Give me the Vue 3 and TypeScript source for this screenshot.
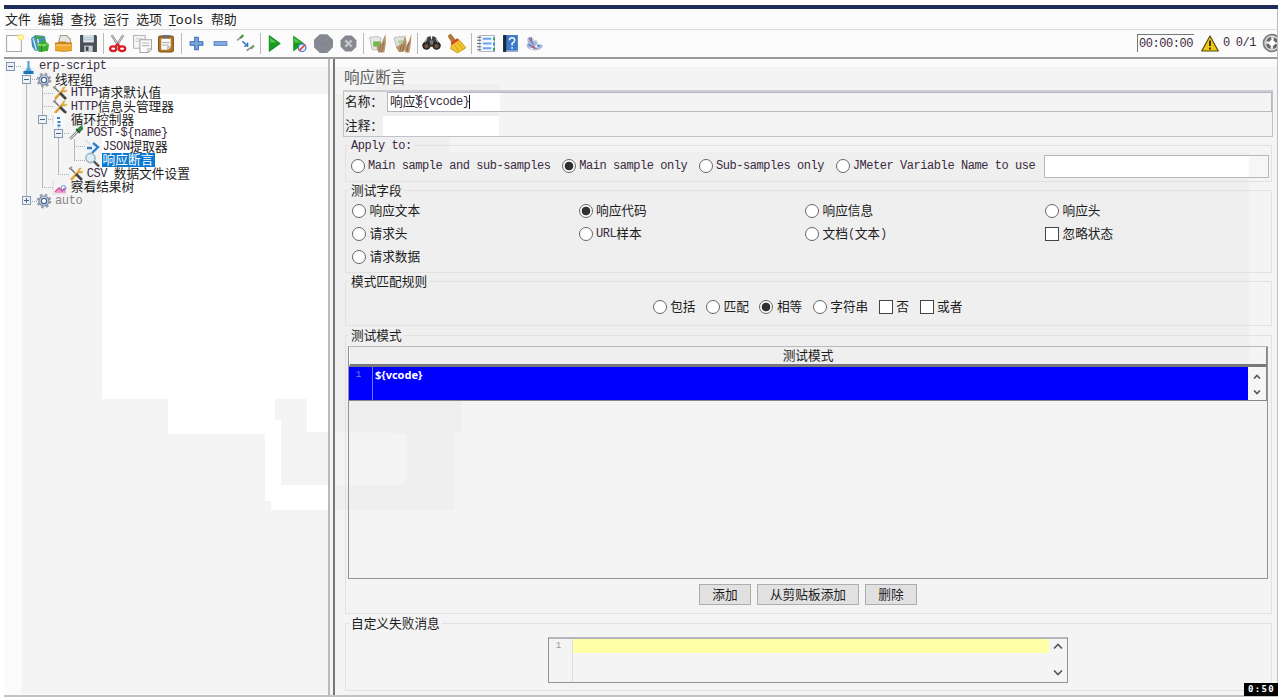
<script setup lang="ts">
import { defineComponent, h } from 'vue'

// Splits a string into half-width and full-width runs so each gets its own metrics.
const Txt = defineComponent({
  props: { t: { type: String, required: true } },
  setup(props) {
    return () => {
      const runs = props.t.match(/[\x20-\x7e]+|[^\x20-\x7e]+/g) ?? []
      return h('span', { class: 'txt' }, runs.map(r =>
        h('span', { class: /^[\x20-\x7e]/.test(r) ? 'latin' : 'cjk' }, r)))
    }
  },
})

const gear = '<g fill="none"><circle cx="8" cy="8" r="6.300" stroke="#9aa2ad" stroke-width="2.200" stroke-dasharray="2.600 2.350"/><circle cx="8" cy="8" r="5" fill="#d3dce7" stroke="#7b8ba3" stroke-width="1.200"/><circle cx="8" cy="8" r="2.700" fill="#fff" stroke="#4a6794" stroke-width="1.300"/></g>'
const tools = '<path d="M3 14L11 5" stroke="#e0a22c" stroke-width="2.600"/><path d="M10 5q0-4 4-3l-2 2 1 1.500 2.200-1q0 3.500-4 3z" fill="#e0b048"/><path d="M2 2l5 5" stroke="#777" stroke-width="1.600"/><path d="M8 8l6 6" stroke="#444" stroke-width="2.600"/><path d="M1 3l3-2" stroke="#999" stroke-width="1.600"/>'

const icons: Record<string, string> = {
  newFile: '<path d="M1.500 1.500h14v15h-14z" fill="#fdfdfb" stroke="#aaa"/><circle cx="15" cy="3" r="3" fill="#fbe97a"/><circle cx="15" cy="3" r="1.300" fill="#fffbd0"/>',
  templates: '<path d="M1 4l4-3 9 1 1 4-3 9-7 1-3-4z" fill="#3f8fc0"/><path d="M3 4l3 11M7 3l1 6" stroke="#cde8f5" stroke-width="1.400"/><path d="M4 2l8 0 0 2-7 1z" fill="#4aa052"/><path d="M7 9l5-2V4l4 4 2 2-1 6-9 1z" fill="#3cae36"/><path d="M7 9l5 1 6-1-5 3-6-1z" fill="#8add68"/><path d="M11 11v6" stroke="#1d8426"/>',
  open: '<path d="M4 9L6 1.500h6l3.500 3.500v5z" fill="#e8e6e2" stroke="#a59b8d"/><path d="M1 8h3l1-1h6l1 1h5v8q-8 1.500-16 0z" fill="#c9811a"/><path d="M1 10h16v5.500q-8 1-16 0z" fill="#eda832"/><path d="M2 10.500h14" stroke="#ffd887"/>',
  save: '<path d="M1 1h15l1 1v15H1z" fill="#484f58"/><path d="M4 1h10v7H4z" fill="#dfe9ed"/><path d="M4 3.500h10M4 5.500h10" stroke="#a9c6d0"/><path d="M5 11h8v6H5z" fill="#c9cdd1"/><path d="M6.500 12h2.500v4H6.500z" fill="#3d444c"/>',
  cut: '<path d="M3.500 1l7 11M14.500 1l-7 11" stroke="#949494" stroke-width="2.400"/><path d="M3.500 1l7 11M14.500 1l-7 11" stroke="#d5d5d5" stroke-width=".8"/><ellipse cx="5" cy="14" rx="3" ry="2.200" fill="none" stroke="#d91f26" stroke-width="2.200"/><ellipse cx="13.300" cy="14" rx="3" ry="2.200" fill="none" stroke="#d91f26" stroke-width="2.200"/><path d="M6.500 12.500l2.600-3 2.600 3" stroke="#d91f26" stroke-width="2" fill="none"/>',
  copy: '<path d="M.5 1.500h11v12H.5z" fill="#f6f6f6" stroke="#b5b5b5"/><path d="M2.500 4.500h7M2.500 7h3" stroke="#ccc"/><path d="M6.500 5.500h11v9l-3 3h-8z" fill="#fafafa" stroke="#a5a5a5"/><path d="M8.500 8.500h7M8.500 11h7M14 17v-3h3" stroke="#bbb" fill="none"/>',
  paste: '<rect x="1.500" y="2" width="14" height="15" rx="1.500" fill="#b57721" stroke="#7b511b"/><path d="M4 4.500h9v8l-2.500 2.500H4z" fill="#f8f8f5"/><path d="M5 8h7M5 10.500h6" stroke="#aaa"/><path d="M5 1h7v3H5z" fill="#6d6d6d"/><path d="M10 15v-3h3" fill="#ccc" stroke="#999" stroke-width=".6"/>',
  plus: '<path d="M7.300 3h3.400v4.300H15v3.400h-4.300V15H7.300v-4.300H3V7.300h4.300z" fill="#7da6de" stroke="#376bb4"/>',
  minus: '<rect x="3" y="7.300" width="12" height="3.400" fill="#8db1e2" stroke="#4f7fc4"/>',
  toggle: '<path d="M1 6l5-4M11 15l6-4" stroke="#999" stroke-width="1.600"/><path d="M4 4l3-3" stroke="#47913c" stroke-width="2"/><path d="M14 14l3-3" stroke="#65a35a" stroke-width="2"/><path d="M6 7l5 4M11 8v3.500H7.500" stroke="#2b77c8" stroke-width="1.300" fill="none"/><path d="M10 16l2-2" stroke="#777"/>',
  play: '<path d="M4 1.500L14.500 9 4 16.500z" fill="#149b1d" stroke="#0b7714" stroke-width=".7"/><path d="M5 3.500l6 4.500H5z" fill="#54c652"/>',
  playNoPause: '<path d="M3 1.500L13.500 9 3 16.500z" fill="#149b1d"/><path d="M4 3.500l6 4.500H4z" fill="#54c652"/><circle cx="11.500" cy="13" r="3.600" fill="#dce8fa" stroke="#4c7fcb" stroke-width="1.200"/><path d="M8.500 16l6-6" stroke="#d6433f" stroke-width="1.400"/>',
  stop: '<path d="M5.500.2h7L18 5.500v7L12.500 18h-7L0 12.500v-7z" fill="#858991"/><path d="M6 8h1M11 9h1M8 10h1" stroke="#6f737b"/>',
  shutdown: '<path d="M6 1.500h6l4.500 4.500v6L12 16.500H6L1.500 12V6z" fill="#85898f"/><path d="M6 6l6 6M12 6l-6 6" stroke="#c3c5c9" stroke-width="2.200"/>',
  clear: '<path d="M1.500 3.500l2-1 1 1 2-1.500 1 1 2-1 1 1.500 2 .5-1 4 0 7H4L2.500 8z" fill="#e6e8e6" stroke="#b3b3b3" stroke-width=".8"/><path d="M5 7h7v5H5z" fill="#6fb84c"/><path d="M16.500 0L13 8l-5 5 2 4.500h5.500l1.500-9z" fill="#b9946a"/><path d="M12 10l-1.500 7M15 8l-2 9" stroke="#86664a" stroke-width=".8"/>',
  clearAll: '<path d="M1 4l2-1.500 1 1L6 2l1 1 2-1 2 1 1 5-2 6H4z" fill="#dfe3dc" stroke="#b3b3b3" stroke-width=".8"/><path d="M5 6h5v3H5z" fill="#a9cf98"/><path d="M11.500 1L9.500 8 3 12.500l2.500 4.500H10l3-9zM17.500 0L14.500 8 10 14l2 3.500h3.500l1.500-9z" fill="#b9946a"/><path d="M8.500 10l-2 6M11 9l-2 7M15 8l-2 9" stroke="#7d5d40" stroke-width=".8"/>',
  search: '<path d="M2 8l3-5 3-1 1 4 1-4 3 1 3 5v4H2z" fill="#3d3c3b"/><circle cx="4.200" cy="11" r="4" fill="#282827"/><circle cx="13.800" cy="11" r="4" fill="#282827"/><circle cx="4.200" cy="11.500" r="2" fill="#76523d"/><circle cx="13.800" cy="11.500" r="2" fill="#76523d"/><path d="M7.500 6h3v4h-3z" fill="#777"/><path d="M5 4l-2 4M13 4l2 4" stroke="#aaa"/>',
  resetSearch: '<path d="M1 2l2.500-2L8 6 5 8.500z" fill="#b87934" stroke="#8a5a24" stroke-width=".6"/><path d="M4.500 9L11 5l7 8-8 5-6.500-4z" fill="#f3c52d" stroke="#b48812" stroke-width=".7"/><path d="M4 9.500l6.500-4.500" stroke="#d63f2b" stroke-width="2.200"/><path d="M7 10l4 6M10 8l5 6" stroke="#c99a1a" stroke-width=".8"/>',
  functions: '<path d="M3.500 1.500h14v15h-14z" fill="#f3f7ff" stroke="#b0b5bf"/><path d="M1 3h4M1 6h4M1 9h4M1 12h4M1 15h4" stroke="#666"/><path d="M6.500 4.500h8M6.500 9h8M6.500 13.500h8" stroke="#6aa3ea" stroke-width="2"/><path d="M17 3v3M17 13v3" stroke="#279447" stroke-width="1.500"/><path d="M17 8v3" stroke="#287ad0" stroke-width="1.500"/>',
  help: '<path d="M2 1h14v16H2z" fill="#3b78c6"/><path d="M2 1h3v16H2z" fill="#1e2a3b"/><path d="M5 15.500h11V17H5z" fill="#9eb6d8"/><path d="M8 6q0-2.500 2.500-2.500T13 6q0 1.500-2.500 3v2" stroke="#eef5ff" stroke-width="1.500" fill="none"/><path d="M9.700 12.500h1.600V14H9.700z" fill="#fff"/>',
  feather: '<path d="M2.500 13q-2.500-3 .5-4.500Q1 4 4 2.500q4 0 4.500 4.500 1.500-2 3 0 .5 2 .5 3.500 2-2 5 .5-1 4-7 4.500-5 0-7.500-2.500z" fill="#a9bce0"/><path d="M4 4l4 6M3 10l5 2 6-1" stroke="#4d69a8" fill="none"/><path d="M6 3v5M6 12l5 2" stroke="#cf5a62" stroke-width="1.200"/><path d="M9 12l2-2 1 3zM5 13l3 1-2 1z" fill="#fff"/>',
  flask: '<path d="M7 3h3v4l4 8H3l4-8z" fill="#dbe9f2"/><path d="M7.500 3h2v6l3 6h-8l3-6z" fill="#5aa4d6"/><path d="M3.500 13h10v3h-10z" fill="#1678bb"/>',
  gear, tools,
  loop: '<path d="M1 1h12v14H1z" fill="#f8fafc"/><path d="M1 13V3" stroke="#cfd6dd"/><path d="M5 6h3M5.500 10h3M5.500 13.500h3" stroke="#2e83d2" stroke-width="2"/>',
  sampler: '<path d="M2 14L10 6" stroke="#8d9494" stroke-width="2.600"/><path d="M2 14L9 7" stroke="#e2e6e6"/><path d="M8 5l3-3q2-2 3.500-.5t0 3.500L11 8z" fill="#2f8844"/><path d="M8 4l4 4" stroke="#37463b" stroke-width="1.500"/>',
  arrow: '<path d="M1 1l3 2 2 3" stroke="#c5d6ea" fill="none"/><path d="M3 9h5M9 4l5 4-6 6" stroke="#2c80cb" stroke-width="2.400" fill="none"/>',
  lens: '<circle cx="6.500" cy="6" r="4.600" fill="#d7edf9" stroke="#a6b6c3" stroke-width="1.600"/><path d="M10 9.500l5 5" stroke="#4d4f52" stroke-width="2.400"/>',
  graph: '<path d="M1 1v14h14" stroke="#ddd" fill="none"/><path d="M3 14l4-4 3 2 3-3 1 5z" fill="#ef9ac6"/><path d="M3 13l4-4 3 3 3-3" stroke="#d83e93" stroke-width="1.300" fill="none"/><circle cx="11.500" cy="9" r="2.500" fill="none" stroke="#6a94cc"/>',
}

const toolGroups: string[][] = [
  ['newFile', 'templates', 'open', 'save'],
  ['cut', 'copy', 'paste'],
  ['plus', 'minus', 'toggle'],
  ['play', 'playNoPause', 'stop', 'shutdown'],
  ['clear', 'clearAll'],
  ['search', 'resetSearch'],
  ['functions', 'help', 'feather'],
]

interface Node { label: string; depth: number; icon: string; box?: '-' | '+'; selected?: boolean; off?: boolean }
const tree: Node[] = [
  { label: 'erp-script', depth: 0, icon: 'flask', box: '-' },
  { label: '线程组', depth: 1, icon: 'gear', box: '-' },
  { label: 'HTTP请求默认值', depth: 2, icon: 'tools' },
  { label: 'HTTP信息头管理器', depth: 2, icon: 'tools' },
  { label: '循环控制器', depth: 2, icon: 'loop', box: '-' },
  { label: 'POST-${name}', depth: 3, icon: 'sampler', box: '-' },
  { label: 'JSON提取器', depth: 4, icon: 'arrow' },
  { label: '响应断言', depth: 4, icon: 'lens', selected: true },
  { label: 'CSV 数据文件设置', depth: 3, icon: 'tools' },
  { label: '察看结果树', depth: 2, icon: 'graph' },
  { label: 'auto', depth: 1, icon: 'gear', box: '+', off: true },
]

interface Opt { label: string; on?: boolean; check?: boolean }
const scopes: Opt[] = [
  { label: 'Main sample and sub-samples' },
  { label: 'Main sample only', on: true },
  { label: 'Sub-samples only' },
  { label: 'JMeter Variable Name to use' },
]
const fields: Opt[] = [
  { label: '响应文本' }, { label: '响应代码', on: true }, { label: '响应信息' }, { label: '响应头' },
  { label: '请求头' }, { label: 'URL样本' }, { label: '文档(文本)' }, { label: '忽略状态', check: true },
  { label: '请求数据' },
]
const rules: Opt[] = [
  { label: '包括' }, { label: '匹配' }, { label: '相等', on: true }, { label: '字符串' },
  { label: '否', check: true }, { label: '或者', check: true },
]
const menus = ['文件', '编辑', '查找', '运行', '选项']
const patternName = '响应${vcode}'
const pattern = '${vcode}'
</script>

<template>
  <div class="screen">
    <svg class="backdrop" width="1280" height="700" shape-rendering="crispEdges">
      <rect x="4" y="9" width="1274" height="687" fill="#fbfbfb" />
      <rect x="22" y="67" width="307" height="627" fill="#f4f4f4" />
      <path d="M102 94H329V432H307V399H275V420H281V485H329V510H271V501H265V434H168V399H102z" fill="#fff" />
      <rect x="330" y="67" width="948" height="628" fill="#f4f4f4" />
      <path d="M335 94H375V84H499V136H449V152H1249V400H461V432H454V510H335V485H402V482H406V434H391V432H335z" fill="#efefef" />
    </svg>

    <div class="titlebar"></div>
    <nav class="menubar">
      <span v-for="m in menus" :key="m">{{ m }}</span>
      <span class="tools"><u>T</u>ools</span>
      <span>帮助</span>
    </nav>

    <div class="toolbar">
      <template v-for="(g, i) in toolGroups" :key="i">
        <i v-if="i" class="sep"></i>
        <span v-for="n in g" :key="n" class="tool">
          <svg width="19" height="19" viewBox="0 0 18 18" fill="none" v-html="icons[n]"></svg>
        </span>
      </template>
      <div class="status">
        <div class="timer"><Txt t="00:00:00" /></div>
        <svg class="warn" width="18" height="17" viewBox="0 0 18 17">
          <path d="M9 1L17.300 16H.7z" fill="#f0c810" stroke="#574a10" stroke-width="1.200" stroke-linejoin="round" />
          <path d="M9 5.500v5.500M9 12.500v2" stroke="#2b2507" stroke-width="1.800" />
        </svg>
        <Txt class="warns" t="0" />
        <Txt class="threads" t="0/1" />
        <svg class="wheel" width="15" height="20" viewBox="0 0 15 20">
          <circle cx="10" cy="10" r="8.500" fill="#d2d2d2" stroke="#777" stroke-width="1.600" />
          <circle cx="10" cy="10" r="4.600" fill="#fff" stroke="#6a6a6a" stroke-width="3" stroke-dasharray="4.600 2.625" stroke-dashoffset="-1.300" />
        </svg>
      </div>
    </div>

    <div class="body">
      <aside class="tree">
        <svg class="guides" width="200" height="160" fill="none" stroke="#a9adb3">
          <path d="M22.500 14V142M38.500 28V128M54.500 66V115M70.500 80V101" stroke="#b3b6ba" />
          <path d="M12 7.500H18M28 20.500H34M38 34.500H49M38 47.500H49M44 60.500H50M60 74.500H66M70 87.500H82M70 101.500H82M54 115.500H66M38 128.500H49M28 142.500H34" stroke-dasharray="1 1" />
        </svg>
        <div v-for="n in tree" :key="n.label" class="node" :class="{ off: n.off }" :style="{ paddingLeft: 2 + n.depth * 15.9 + 'px' }">
          <i class="box" :class="{ shown: n.box, plus: n.box === '+' }"></i>
          <svg class="nicon" width="16" height="16" viewBox="0 0 16 16" fill="none" v-html="icons[n.icon]"></svg>
          <span class="label" :class="{ selected: n.selected }"><Txt :t="n.label" /></span>
        </div>
      </aside>

      <main class="panel">
        <h1><span>响应断言</span></h1>

        <section class="naming">
          <div class="line first">
            <label><Txt t="名称：" /></label>
            <div class="input">
              <Txt :t="patternName" /><i class="caret"></i>
              <svg class="ibeam" width="9" height="15" viewBox="0 0 9 15" fill="none" stroke="#555">
                <path d="M1 1.500h2.500l1 1 1-1H8M4.500 2v11M1 13.500h2.500l1-1 1 1H8" />
              </svg>
            </div>
          </div>
          <div class="line">
            <label><Txt t="注释：" /></label>
            <div class="comment"></div>
          </div>
        </section>

        <section class="group scope">
          <div class="legend"><Txt t="Apply to:" /></div>
          <span v-for="o in scopes" :key="o.label" class="opt">
            <i class="mark" :class="{ on: o.on }"></i><Txt :t="o.label" />
          </span>
          <div class="varname"></div>
        </section>

        <section class="group fields">
          <div class="legend"><Txt t="测试字段" /></div>
          <span v-for="o in fields" :key="o.label" class="opt">
            <i class="mark" :class="{ on: o.on, check: o.check }"></i><Txt :t="o.label" />
          </span>
        </section>

        <section class="group rules">
          <div class="legend"><Txt t="模式匹配规则" /></div>
          <span v-for="o in rules" :key="o.label" class="opt">
            <i class="mark" :class="{ on: o.on, check: o.check }"></i><Txt :t="o.label" />
          </span>
        </section>

        <section class="group patterns">
          <div class="legend"><Txt t="测试模式" /></div>
          <div class="table">
            <div class="thead"><Txt t="测试模式" /></div>
            <div class="trow">
              <div class="num"><span>1</span></div>
              <div class="code">{{ pattern }}</div>
              <div class="scroll">
                <svg width="8" height="5" viewBox="0 0 8 5"><path d="M1 4.500L4 1.500 7 4.500" /></svg>
                <svg width="8" height="5" viewBox="0 0 8 5"><path d="M1 .5L4 3.500 7 .5" /></svg>
              </div>
            </div>
          </div>
          <div class="buttons">
            <button class="short"><Txt t="添加" /></button>
            <button class="long"><Txt t="从剪贴板添加" /></button>
            <button class="short"><Txt t="删除" /></button>
          </div>
        </section>

        <section class="group message">
          <div class="legend pale"><Txt t="自定义失败消息" /></div>
          <div class="editor">
            <div class="gut">1</div>
            <div class="current"></div>
            <div class="scroll">
              <svg width="10" height="6" viewBox="0 0 10 6"><path d="M1 5.500L5 1.500 9 5.500" /></svg>
              <svg width="10" height="6" viewBox="0 0 10 6"><path d="M1 .5L5 4.500 9 .5" /></svg>
            </div>
          </div>
        </section>
      </main>
    </div>
    <div class="clock">0:50</div>
  </div>
</template>

<style>
html, body { margin: 0; background: #fff; overflow: hidden; }
.txt { white-space: pre; display: inline-flex; align-items: center; height: 13px; }
.txt .cjk { font: 12.7px/13px "Noto Sans CJK SC", sans-serif; color: #1c1c1c; margin-bottom: 3px; }
.txt .latin { font: 12px/13px "Liberation Mono", monospace; letter-spacing: -0.44px; color: #3b2a41; margin-top: 1px; }
</style>

<style scoped>
* { box-sizing: border-box; }
.screen { position: relative; width: 1280px; height: 700px; overflow: hidden; display: flex; flex-direction: column; padding: 5px 2px 0 4px; font-family: "Noto Sans", "Noto Sans CJK SC", sans-serif; }
.backdrop { position: absolute; left: 0; top: 0; }
.titlebar { position: relative; height: 4px; background: #1d2c59; flex: none; }
.menubar { position: relative; height: 21px; flex: none; display: flex; align-items: center; gap: 7px; padding-left: 1px; border-bottom: 1px solid #d5dbdb; font-size: 12.900px; line-height: 20px; color: #222; border-right: 1px solid #bbb; }
.menubar .tools { width: 35px; font-size: 13px; letter-spacing: 0.6px; }
.toolbar { position: relative; height: 29px; flex: none; display: flex; align-items: center; border-bottom: 2px solid #9b9b9b; border-right: 1px solid #bbb; padding-bottom: 1px; }
.tool { width: 24.500px; padding-right: 3.500px; display: flex; justify-content: center; flex: none; }
.sep { width: 1px; height: 21px; background: #b9b9b9; margin: 0 3.500px 0 0.500px; flex: none; }
.status { margin-left: auto; display: flex; align-items: center; height: 26px; }
.timer { width: 57px; height: 18px; border-left: 1px solid #777; border-top: 1px solid #777; padding: 0 0 0 1px; display: flex; align-items: center; }
.warn { margin-left: 7px; }
.warns { margin-left: 4px; }
.threads { margin-left: 6px; }
.wheel { margin-left: 6px; }

.body { position: relative; height: 638px; flex: none; display: flex; border-bottom: 2px solid #c2c2c4; border-right: 1px solid #bfbfbf; }
.tree { position: relative; width: 326px; flex: none; padding-top: .5px; border-right: 2px solid #b9bac0; }
.guides { position: absolute; left: 0; top: 0; }
.node { position: relative; height: 13.450px; display: flex; align-items: center; }
.box { width: 9px; height: 9px; flex: none; }
.box.shown { border: 1px solid #8397b0; background: linear-gradient(#47668f, #47668f) center / 5px 1px no-repeat, #eef2f7; }
.box.shown.plus { background: linear-gradient(#47668f, #47668f) center / 5px 1px no-repeat, linear-gradient(#47668f, #47668f) center / 1px 5px no-repeat, #eef2f7; }
.nicon { margin: 0 2px 0 5px; flex: none; }
.label { height: 14px; display: flex; align-items: center; padding: 0 1px; }
.label.selected { background: #0b78d1; padding-right: 2px; }
.label.selected :deep(.cjk) { color: #fff; }
.off :deep(.latin) { color: #8a858c; letter-spacing: -0.300px; }

.panel { flex: 1; margin-left: 3px; border-left: 2px solid #77777b; display: flex; flex-direction: column; padding: 0 4px 0 8px; min-width: 0; }
h1 { margin: 0; height: 32px; flex: none; padding: 8px 0 0 1px; font: 400 15.600px/18px "Noto Sans CJK SC", sans-serif; color: #606060; }
.naming { height: 47px; flex: none; border: 1px solid #bfc2c8; border-top: 2px solid #cccdd2; margin-top: -1px; }
.line { display: flex; height: 20px; align-items: center; }
.line label { width: 39px; padding-left: 1px; flex: none; display: flex; overflow: visible; }
.line.first { height: 20px; }
.line.first label { width: 43px; }
.line + .line { margin-top: 4px; }
.input { position: relative; flex: 1; height: 20px; border: 1px solid #b5b8bf; display: flex; align-items: center; padding-left: 2px; background: linear-gradient(#fff, #fff) 0 0 / 112px 100% no-repeat; }
.caret { width: 1px; height: 14px; background: #111; }
.ibeam { position: absolute; left: 26px; top: 1px; }
.comment { width: 116px; height: 20px; background: #fff; }

.group { position: relative; margin: 0 1px 0 2px; flex: none; border: 1px solid #e2e2e2; }
.legend { position: absolute; left: 3px; top: -7px; padding: 0 2px; background: #efefef; line-height: 13px; display: flex; }
.legend.pale { background: #f4f4f4; }
.opt { display: inline-flex; align-items: center; gap: 3.500px; height: 16px; }
.mark { width: 14px; height: 14px; border: 1px solid #666; border-radius: 50%; background: #fff; flex: none; }
.mark.on { background: radial-gradient(circle, #303030 0 4px, #fff 4.700px); }
.mark.check { border-radius: 0; border-color: #444; }

.scope { height: 37px; margin-top: 8px; display: flex; align-items: center; padding: 5px 2px 0 5px; }
.scope .opt { gap: 3px; margin-right: 11.600px; }
.scope .opt:nth-of-type(4) { margin-right: 0; }
.varname { margin-left: auto; width: 225px; height: 23px; border: 1px solid #b5b8bf; background: linear-gradient(#fff, #fff) 0 0 / 204px 100% no-repeat, #f6f6f6; }
.fields { height: 83px; margin-top: 8px; padding: 9px 0 0 6px; display: grid; grid-template-columns: 226.500px 226.500px 240px 1fr; grid-auto-rows: 22.800px; align-items: center; }
.rules { height: 45px; margin-top: 8px; display: flex; justify-content: center; align-items: center; gap: 10.500px; padding: 6px 2px 0 0; }
.patterns { height: 279px; margin-top: 9px; padding: 10px 3px 0 2px; }
.table { height: 233px; border: 1px solid #8c919a; border-top-color: #b5b8bf; }
.thead { height: 20px; display: flex; justify-content: center; align-items: center; border-bottom: 3px solid #77777c; border-left: 1px solid #fff; border-right: 1px solid #88888c; }
.trow { height: 34px; display: flex; background: #00f; border-bottom: 1px solid #88888c; border-right: 1px solid #88888c; }
.num { width: 24px; border-right: 1px solid #7676ff; font: 9px/15px "Liberation Mono", monospace; color: #8484c8; text-align: center; padding: 1px 4px 0 0; }
.code { flex: 1; padding-left: 2px; font: 700 11px/15px "Noto Sans", sans-serif; color: #fff; }
.scroll { display: flex; flex-direction: column; align-items: center; justify-content: space-between; }
.scroll path { fill: none; stroke: #555; stroke-width: 1.600; }
.trow .scroll { width: 18px; background: #f5f5f5; padding: 7px 0 5px; }
.buttons { display: flex; justify-content: center; gap: 6px; padding: 5px 0 0 0; }
.buttons button { height: 21px; padding: 0; border: 1px solid #adadad; background: #e1e1e1; display: flex; align-items: center; justify-content: center; }
.short { width: 52px; }
.long { width: 102px; }
.message { height: 68px; margin-top: 9px; padding: 13px 0 0 202px; }
.editor { width: 520px; height: 46px; border: 1px solid #8f939c; border-top: 2px solid #b5b6bd; display: flex; }
.gut { width: 24px; border-right: 1px solid #ddd; font: 9px/14px "Liberation Mono", monospace; color: #999; text-align: center; padding-right: 4px; }
.current { flex: 1; height: 14px; background: #ffffa8; }
.editor .scroll { width: 18px; padding: 4px 0 6px; }
.clock { position: absolute; left: 1244px; top: 683px; width: 34px; height: 13px; background: #000; color: #fff; font: 700 9px/13px "DejaVu Sans Mono", monospace; letter-spacing: 1.300px; text-align: center; padding-left: 1px; }
</style>
